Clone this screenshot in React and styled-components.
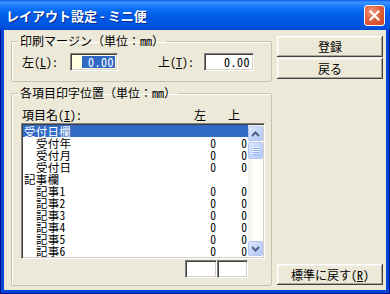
import React from "react";
import styled, { createGlobalStyle } from "styled-components";

const GlobalStyle = createGlobalStyle`
  html, body { margin: 0; padding: 0; background: #fff; }
  body {
    font-family: "Noto Sans Mono CJK JP", "Noto Sans CJK JP", sans-serif;
    font-size: 12px;
    color: #000;
  }
`;

const Window = styled.div`
  width: 390px;
  height: 294px;
  box-sizing: border-box;
  display: flex;
  flex-direction: column;
  background: #0846DA;
  border: 1px solid #00138C;
  border-top: none;
`;

const TitleBar = styled.div`
  height: 30px;
  flex: none;
  display: flex;
  align-items: center;
  padding: 0 5px 0 5px;
  margin: 0 -1px;
  background: linear-gradient(180deg, #0A5AEB 0%, #3D95FF 7%, #2A88FF 14%, #0F74F8 26%, #0565EE 40%, #005BE6 55%, #0056E2 75%, #0052DE 90%, #0047D0 100%);
`;

const Title = styled.span`
  color: #fff;
  font-family: "Noto Sans CJK JP", sans-serif;
  font-weight: 700;
  font-size: 13px;
  text-shadow: 1px 1px 0 #0A2D8C;
  margin-left: 1px;
  margin-top: 1px;
`;

const CloseBtn = styled.div`
  margin-left: auto;
  width: 21px;
  height: 21px;
  box-sizing: border-box;
  border: 1px solid #fff;
  border-radius: 3px;
  background: radial-gradient(circle at 35% 30%, #F09A7E 0%, #E2603D 45%, #CB4420 100%);
  display: flex;
  align-items: center;
  justify-content: center;
`;

const Body = styled.div`
  flex: 1;
  margin: 0 3px 3px;
  background: #ECE9D8;
  display: flex;
  gap: 5px;
  padding: 5px 3px 5px 7px;
  min-height: 0;
`;

const LeftCol = styled.div`
  width: 261px;
  display: flex;
  flex-direction: column;
  gap: 5px;
`;

const RightCol = styled.div`
  width: 106px;
  display: flex;
  flex-direction: column;
  gap: 1px;
  padding-top: 1px;
`;

const Group = styled.fieldset`
  margin: 0;
  padding: 0 6px ${(p) => p.$pb}px 9px;
  border: 1px solid #C5C2B2;
  box-shadow: inset 1px 1px #fff;
  border-radius: 2px;
  display: flex;
  flex-direction: column;
  flex: ${(p) => (p.$grow ? 1 : "none")};
  min-width: 0;
`;

const Legend = styled.legend`
  font-size: 12px;
  line-height: 12px;
  padding: 0 2px;
  margin-left: -3px;
  color: #000;
`;

const MarginRow = styled.div`
  display: flex;
  align-items: center;
  margin-top: 6px;
  height: 18px;
`;

const FieldLabel = styled.span`
  width: ${(p) => p.$w}px;
  margin-left: ${(p) => p.$ml || 0}px;
  padding-left: 1px;
  white-space: nowrap;
  line-height: 18px;
`;

const U = styled.span`
  text-decoration: underline;
`;

const TextBox = styled.div`
  width: ${(p) => p.$w}px;
  height: 18px;
  box-sizing: border-box;
  background: ${(p) => (p.$focused ? "#FFFFE1" : "#fff")};
  border-style: solid;
  border-width: 1px;
  border-color: #808080 #fff #fff #808080;
  box-shadow: inset 1px 1px #404040, inset -1px -1px #D4D0C8;
  display: flex;
  align-items: center;
  justify-content: flex-end;
  padding: 2px;
  line-height: 12px;
`;

const Sel = styled.span`
  background: ${(p) => (p.$on ? "#316AC5" : "transparent")};
  color: ${(p) => (p.$on ? "#fff" : "#000")};
  height: 12px;
  line-height: 12px;
  padding: 0 1px 0 6px;
  letter-spacing: 0.5px;
`;

const HeadRow = styled.div`
  display: flex;
  align-items: center;
  height: 14px;
  margin-top: 8px;
  padding-right: 25px;
  padding-left: 1px;
`;

const HeadCell = styled.span`
  margin-left: ${(p) => p.$ml};
`;

const ListBox = styled.div`
  margin-top: 2px;
  height: 136px;
  box-sizing: border-box;
  border-style: solid;
  border-width: 1px;
  border-color: #808080 #fff #fff #808080;
  box-shadow: inset 1px 1px #404040, inset -1px -1px #D4D0C8;
  background: #fff;
  padding: 1px;
  display: flex;
`;

const Rows = styled.div`
  flex: 1;
  display: flex;
  flex-direction: column;
`;

const Row = styled.div`
  display: grid;
  grid-template-columns: 1fr 30px 31px;
  height: 12px;
  line-height: 12px;
  font-size: 11.5px;
  padding-right: 1px;
  background: ${(p) => (p.$sel ? "#316AC5" : "transparent")};
  color: ${(p) => (p.$sel ? "#fff" : "#000")};
  white-space: nowrap;
`;

const Name = styled.span`
  padding-left: ${(p) => (p.$child ? 13 : 1)}px;
  letter-spacing: 0.2px;
`;

const Num = styled.span`
  text-align: right;
`;

const ScrollBar = styled.div`
  width: 15px;
  display: flex;
  flex-direction: column;
  background: linear-gradient(90deg, #F3F1EC 0%, #FEFEFB 40%, #FEFEFB 100%);
`;

const ScrollBtn = styled.div`
  height: 15px;
  margin: ${(p) => p.$m};
  box-sizing: border-box;
  border: 1px solid #B4C7F4;
  border-radius: 2px;
  background: linear-gradient(135deg, #E3ECFE 0%, #C6D6FC 45%, #B5CAF7 100%);
  display: flex;
  align-items: center;
  justify-content: center;
`;

const Thumb = styled(ScrollBtn)`
  height: 17px;
  margin-top: 1px;
`;

const Track = styled.div`
  flex: 1;
`;

const BoxRow = styled.div`
  display: flex;
  justify-content: flex-end;
  padding-right: 17px;
  margin-top: 1px;
`;

const SmallBox = styled.div`
  width: ${(p) => p.$w}px;
  height: 18px;
  box-sizing: border-box;
  background: #fff;
  border-style: solid;
  border-width: 1px;
  border-color: #808080 #fff #fff #808080;
  box-shadow: inset 1px 1px #404040, inset -1px -1px #D4D0C8;
`;

const Button = styled.button`
  height: 21px;
  width: 106px;
  margin-top: ${(p) => (p.$bottom ? "auto" : "0")};
  border: none;
  padding: 0;
  background: #ECE9D8;
  box-shadow: inset -1px -1px #404040, inset 1px 1px #fff, inset -2px -2px #ACA899, inset 2px 2px #F5F4EC;
  font-family: "Noto Sans Mono CJK JP", "Noto Sans CJK JP", sans-serif;
  font-size: 12px;
  color: #000;
  line-height: 21px;
`;

const rows = [
  { name: "受付日欄", sel: true },
  { name: "受付年", child: true, a: 0, b: 0 },
  { name: "受付月", child: true, a: 0, b: 0 },
  { name: "受付日", child: true, a: 0, b: 0 },
  { name: "記事欄" },
  { name: "記事1", child: true, a: 0, b: 0 },
  { name: "記事2", child: true, a: 0, b: 0 },
  { name: "記事3", child: true, a: 0, b: 0 },
  { name: "記事4", child: true, a: 0, b: 0 },
  { name: "記事5", child: true, a: 0, b: 0 },
  { name: "記事6", child: true, a: 0, b: 0 },
];

function Chevron({ up }) {
  return (
    <svg width="9" height="6" viewBox="0 0 9 6">
      <path
        d={up ? "M1 5 L4.5 1.5 L8 5" : "M1 1 L4.5 4.5 L8 1"}
        fill="none"
        stroke="#4D6185"
        strokeWidth="2"
      />
    </svg>
  );
}

function Grip() {
  return (
    <svg width="7" height="8" viewBox="0 0 7 8">
      {[0, 2, 4, 6].map((y) => (
        <g key={y}>
          <rect x="0" y={y} width="7" height="1" fill="#EEF4FE" />
          <rect x="1" y={y + 1} width="6" height="1" fill="#8CB0F8" />
        </g>
      ))}
    </svg>
  );
}

export default function App() {
  return (
    <>
      <GlobalStyle />
      <Window>
        <TitleBar>
          <Title>レイアウト設定 - ミニ便</Title>
          <CloseBtn>
            <svg width="11" height="11" viewBox="0 0 11 11">
              <path d="M1.5 1.5 L9.5 9.5 M9.5 1.5 L1.5 9.5" stroke="#fff" strokeWidth="2.2" strokeLinecap="square" />
            </svg>
          </CloseBtn>
        </TitleBar>
        <Body>
          <LeftCol>
            <Group $pb={10}>
              <Legend>印刷マージン（単位：mm）</Legend>
              <MarginRow>
                <FieldLabel $w={48}>
                  左(<U>L</U>):
                </FieldLabel>
                <TextBox $w={48} $focused>
                  <Sel $on>0.00</Sel>
                </TextBox>
                <FieldLabel $w={46} $ml={39}>
                  上(<U>T</U>):
                </FieldLabel>
                <TextBox $w={50}>
                  <Sel>0.00</Sel>
                </TextBox>
              </MarginRow>
            </Group>
            <Group $pb={7} $grow>
              <Legend>各項目印字位置（単位：mm）</Legend>
              <HeadRow>
                <span>
                  項目名(<U>I</U>):
                </span>
                <HeadCell $ml="auto">左</HeadCell>
                <HeadCell $ml="22px">上</HeadCell>
              </HeadRow>
              <ListBox>
                <Rows>
                  {rows.map((r) => (
                    <Row key={r.name} $sel={r.sel}>
                      <Name $child={r.child}>{r.name}</Name>
                      <Num>{r.a !== undefined ? r.a : ""}</Num>
                      <Num>{r.b !== undefined ? r.b : ""}</Num>
                    </Row>
                  ))}
                </Rows>
                <ScrollBar>
                  <ScrollBtn $m="1px 0 0">
                    <Chevron up />
                  </ScrollBtn>
                  <Thumb $m="1px 0 0">
                    <Grip />
                  </Thumb>
                  <Track />
                  <ScrollBtn $m="0 0 1px">
                    <Chevron />
                  </ScrollBtn>
                </ScrollBar>
              </ListBox>
              <BoxRow>
                <SmallBox $w={32} />
                <SmallBox $w={31} />
              </BoxRow>
            </Group>
          </LeftCol>
          <RightCol>
            <Button>登録</Button>
            <Button>戻る</Button>
            <Button $bottom>
              標準に戻す(<U>R</U>)
            </Button>
          </RightCol>
        </Body>
      </Window>
    </>
  );
}
